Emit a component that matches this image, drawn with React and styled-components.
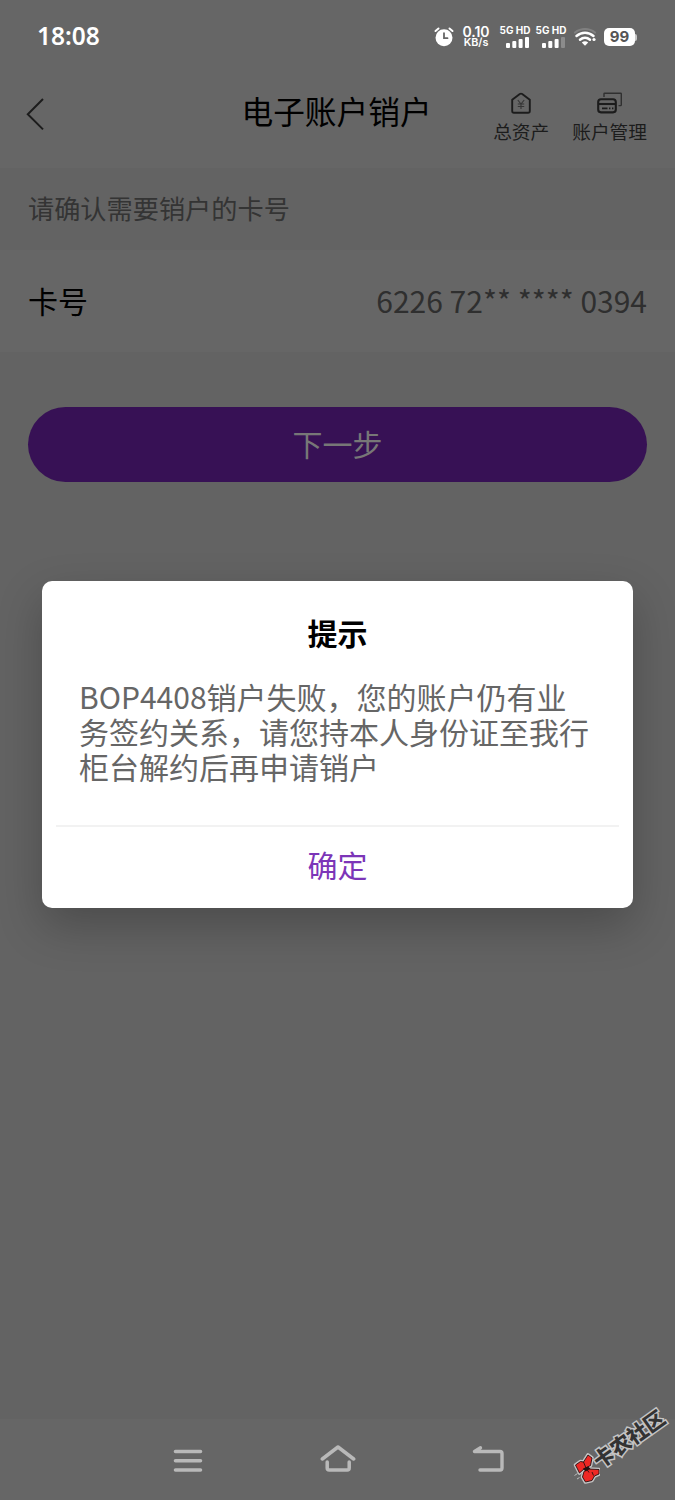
import styled, { createGlobalStyle } from 'styled-components';

const GlobalStyle = createGlobalStyle`
  * {
    box-sizing: border-box;
  }

  body {
    margin: 0;
    background: #636363;
    font-family: 'Noto Sans CJK SC', sans-serif;
  }

  p, h1, h2 {
    margin: 0;
    font-weight: 400;
  }

  button {
    border: 0;
    padding: 0;
    font-family: inherit;
    background: none;
  }

  svg {
    display: block;
  }
`;

const Page = styled.div`
  position: relative;
  display: flex;
  flex-direction: column;
  width: 675px;
  height: 1500px;
  overflow: hidden;
  background: #636363;
`;

const StatusBar = styled.div`
  display: flex;
  justify-content: space-between;
  align-items: center;
  height: 74px;
  padding: 0 38px 0 37px;
  background: #666;
  color: #fff;
  font-family: 'Noto Sans', sans-serif;
`;

const Clock = styled.span`
  margin-bottom: 2px;
  font-size: 24.5px;
  font-weight: 600;
  line-height: 30px;
`;

const StatusIcons = styled.div`
  display: flex;
  align-items: center;

  & > svg:last-of-type {
    margin-left: 2px;
  }
`;

const Speed = styled.div`
  display: flex;
  flex-direction: column;
  align-items: center;
  width: 30px;
  margin: -2px 8px 0 7px;
  font-family: 'Inter', sans-serif;
  font-size: 14px;
  font-weight: 600;
  line-height: 13px;
  white-space: nowrap;

  small {
    font-size: 10.8px;
    line-height: 10px;
  }
`;

const Signal = styled.div`
  display: flex;
  flex-direction: column;
  align-items: center;
  width: 32px;
  margin: -2px 4px 0 0;
  font-family: 'Inter', sans-serif;
  font-size: 10px;
  font-weight: 700;
  line-height: 11px;
  white-space: nowrap;

  svg {
    margin: 1px 0 0 5px;
  }
`;

const Battery = styled.div`
  display: flex;
  align-items: center;
  margin-left: 7px;

  span {
    width: 31px;
    height: 18px;
    border-radius: 5px;
    background: #fff;
    color: #555;
    font-family: 'Inter', sans-serif;
    font-size: 15px;
    font-weight: 700;
    line-height: 18px;
    text-align: center;
  }

  &::after {
    content: '';
    width: 2px;
    height: 7px;
    border-radius: 0 2px 2px 0;
    background: #c8c8c8;
  }
`;

const Header = styled.header`
  display: grid;
  grid-template-columns: 1fr auto 1fr;
  height: 94px;
  padding: 0 28px 0 26px;
  background: #666;
`;

const BackButton = styled.button`
  width: 20px;
  height: 34px;
  margin-top: 23px;
`;

const Title = styled.h1`
  margin-top: 13px;
  font-size: 31.7px;
  line-height: 46px;
  color: #000;
`;

const Actions = styled.div`
  display: flex;
  justify-content: flex-end;
  gap: 23px;
  padding-top: 18px;
`;

const Action = styled.div`
  display: flex;
  flex-direction: column;
  align-items: center;
  font-size: 18.7px;
  line-height: 28px;
  color: #1c1c1c;
  white-space: nowrap;

  svg {
    margin-bottom: 3px;
  }
`;

const Hint = styled.p`
  height: 82px;
  padding: 20px 28px 0;
  font-size: 26.2px;
  line-height: 40px;
  color: #343434;
`;

const CardRow = styled.div`
  display: flex;
  justify-content: space-between;
  height: 102px;
  padding: 28px 28px 0;
  background: #666;
  line-height: 44px;
`;

const CardLabel = styled.span`
  font-size: 30px;
  color: #000;
`;

const CardNumber = styled.span`
  font-size: 30px;
  color: #2f2f2f;
`;

const NextButton = styled.button`
  height: 75px;
  margin: 55px 28px 0;
  padding-bottom: 3px;
  border-radius: 38px;
  background: #371155;
  color: #777;
  font-size: 30px;
`;

const Dialog = styled.section`
  position: absolute;
  top: 581px;
  left: 42px;
  width: 591px;
  height: 327px;
  border-radius: 10px;
  background: #fff;
  box-shadow: 0 18px 46px rgba(0, 0, 0, 0.24);
  text-align: center;
`;

const DialogTitle = styled.h2`
  padding-top: 29px;
  font-size: 30px;
  font-weight: 700;
  line-height: 44px;
  color: #000;
`;

const DialogText = styled.p`
  height: 146px;
  margin-top: 25px;
  padding: 0 38px 0 37px;
  font-size: 30px;
  line-height: 34.8px;
  text-align: left;
  color: #666;
`;

const DialogButton = styled.button`
  display: block;
  width: 563px;
  height: 82px;
  margin: 0 14px;
  padding-bottom: 7px;
  border-top: 2px solid #f2f2f2;
  font-size: 30px;
  color: #7c35b8;
`;

const SystemNav = styled.nav`
  display: flex;
  justify-content: center;
  align-items: center;
  gap: 114px;
  height: 81px;
  margin-top: auto;
  background: #666;
`;

const Watermark = styled.div`
  position: absolute;
  left: 572px;
  top: 1452px;
  display: flex;

  span {
    margin: -10px 0 0 -7px;
    font-size: 20.5px;
    font-weight: 900;
    line-height: 28px;
    color: #333;
    white-space: nowrap;
    -webkit-text-stroke: 3px #c4c4c4;
    paint-order: stroke fill;
    transform: rotate(-35.5deg);
    transform-origin: 10px 14px;
  }
`;

const SignalBars = ({ dimLast }) => (
  <svg width="24" height="11" viewBox="0 0 24 11" fill="#fff">
    <rect x="0" y="6" width="4" height="5" rx="1" />
    <rect x="6.3" y="4" width="4" height="7" rx="1" />
    <rect x="12.6" y="2" width="4" height="9" rx="1" />
    <rect x="19" y="0" width="4" height="11" rx="1" opacity={dimLast ? 0.25 : 1} />
  </svg>
);

const AlarmIcon = () => (
  <svg width="20" height="20" viewBox="0 0 20 20" fill="none" strokeLinecap="round">
    <circle cx="10" cy="10.7" r="8.5" fill="#fff" />
    <path d="M1.5 4 4.5 1.5M18.5 4 15.5 1.5" stroke="#fff" strokeWidth="2" />
    <path d="M10 6.2v5h3.5" stroke="#666" strokeWidth="1.8" />
  </svg>
);

const WifiIcon = () => (
  <svg width="24" height="20" viewBox="0 0 24 20" fill="none" strokeLinecap="round">
    <path d="M2 5.5C8 .8 16 .8 22 5.5" stroke="#808080" strokeWidth="2.2" />
    <path d="M3.5 9c5-4.3 12-4.3 17 0" stroke="#fff" strokeWidth="2.5" />
    <path d="M7 12.8c3-2.6 7-2.6 10 0" stroke="#fff" strokeWidth="2.5" />
    <path d="M8.8 15.4c2-1.7 4.4-1.7 6.4 0L12 18.7z" fill="#fff" />
    <circle cx="21" cy="12.5" r="1.6" fill="#fff" />
  </svg>
);

const AssetsIcon = () => (
  <svg width="22" height="22" viewBox="0 0 22 22" fill="none" stroke="#1c1c1c" strokeLinejoin="round">
    <path d="M2.2 7.8 9.8 2q1.2-.8 2.4 0l7.6 5.8V19q0 1.8-1.8 1.8H4q-1.8 0-1.8-1.8z" strokeWidth="1.9" />
    <path d="m7.8 8 3.2 4 3.2-4M11 12v5M7.8 12h6.4M7.8 14.5h6.4" stroke="#353535" strokeWidth="1.1" />
  </svg>
);

const CardsIcon = () => (
  <svg width="26" height="22" viewBox="0 0 26 22" fill="none" stroke="#1c1c1c">
    <path d="M7 5V1.8q0-.6.6-.6h16q.7 0 .7.6v11q0 .8-.8.8h-2" stroke="#303030" strokeWidth="1.4" />
    <rect x="1.2" y="7.2" width="17.6" height="13.2" rx="2.8" strokeWidth="2.1" />
    <path d="M1.2 12h17.6" strokeWidth="2.1" />
    <path d="M5 16.3h5.5M12 16.3h1.4M15 16.3h1.4" strokeWidth="1.8" />
  </svg>
);

const CommunityLogo = () => (
  <svg width="28" height="32" viewBox="0 0 28 32" strokeLinejoin="round">
    <g fill="#c4c4c4" stroke="#c4c4c4" strokeWidth="3.6">
      <path d="m3.5 13 5-3.5 3 .5 4.5-7 4 3-1.5 7.5-6 3-5 4.5z" />
      <path d="m12 19.5 4-2.5 11 .5v4.5l-4.5 2-2.5 4.5-6.5 1.5-3-5z" />
    </g>
    <path d="m2.5 23.5 3-2M5 27l2.5-1.5M22 8l3 3" stroke="#bdbdbd" strokeWidth="1" />
    <g fill="#ee2824" stroke="#261010" strokeWidth="0.9">
      <path d="m3.5 13 5-3.5 3 .5 4.5-7 4 3-1.5 7.5-6 3-5 4.5z" />
      <path d="m12 19.5 4-2.5 11 .5v4.5l-4.5 2-2.5 4.5-6.5 1.5-3-5z" />
      <path d="m11.5 10 2.5 6 3 4.5M20 20l1.5 3.5" fill="none" />
    </g>
    <path d="m11 16.5 5-2 2.5 2-5 3z" fill="#261010" />
  </svg>
);

const App = () => {
  return (
    <Page lang="zh-CN">
      <GlobalStyle />
      <StatusBar>
        <Clock>18:08</Clock>
        <StatusIcons>
          <AlarmIcon />
          <Speed>
            <span>0.10</span>
            <small>KB/s</small>
          </Speed>
          <Signal>
            5G HD
            <SignalBars />
          </Signal>
          <Signal>
            5G HD
            <SignalBars dimLast />
          </Signal>
          <WifiIcon />
          <Battery>
            <span>99</span>
          </Battery>
        </StatusIcons>
      </StatusBar>

      <Header>
        <BackButton aria-label="返回">
          <svg width="20" height="34" viewBox="0 0 20 34" fill="none" stroke="#1c1c1c" strokeWidth="2">
            <path d="M17 2 1.8 17.2 17 32.4" />
          </svg>
        </BackButton>
        <Title>电子账户销户</Title>
        <Actions>
          <Action>
            <AssetsIcon />
            总资产
          </Action>
          <Action>
            <CardsIcon />
            账户管理
          </Action>
        </Actions>
      </Header>

      <Hint>请确认需要销户的卡号</Hint>
      <CardRow>
        <CardLabel>卡号</CardLabel>
        <CardNumber>6226 72** **** 0394</CardNumber>
      </CardRow>
      <NextButton>下一步</NextButton>

      <SystemNav>
        <svg width="36" height="36" viewBox="0 0 36 36" stroke="#b9b9b9" strokeWidth="3.6" strokeLinecap="round">
          <path d="M5.5 9.5h25M5.5 18.7h25M5.5 28h25" />
        </svg>
        <svg width="36" height="36" viewBox="0 0 36 36" fill="none" stroke="#b9b9b9" strokeWidth="3.5" strokeLinecap="round" strokeLinejoin="round">
          <path d="M2.3 17 18 5l15.7 12M7.2 20v6q0 2 2 2h18q2 0 2-2v-6" />
        </svg>
        <svg width="36" height="36" viewBox="0 0 36 36" fill="none" stroke="#b9b9b9" strokeWidth="3.4" strokeLinecap="round" strokeLinejoin="round">
          <path d="M10.5 5.8 4.5 9.5h25.5q2 0 2 2V26q0 2-2 2H10" />
        </svg>
      </SystemNav>

      <Dialog role="dialog">
        <DialogTitle>提示</DialogTitle>
        <DialogText>BOP4408销户失败，您的账户仍有业务签约关系，请您持本人身份证至我行柜台解约后再申请销户</DialogText>
        <DialogButton>确定</DialogButton>
      </Dialog>

      <Watermark>
        <CommunityLogo />
        <span>卡农社区</span>
      </Watermark>
    </Page>
  );
};

export default App;
